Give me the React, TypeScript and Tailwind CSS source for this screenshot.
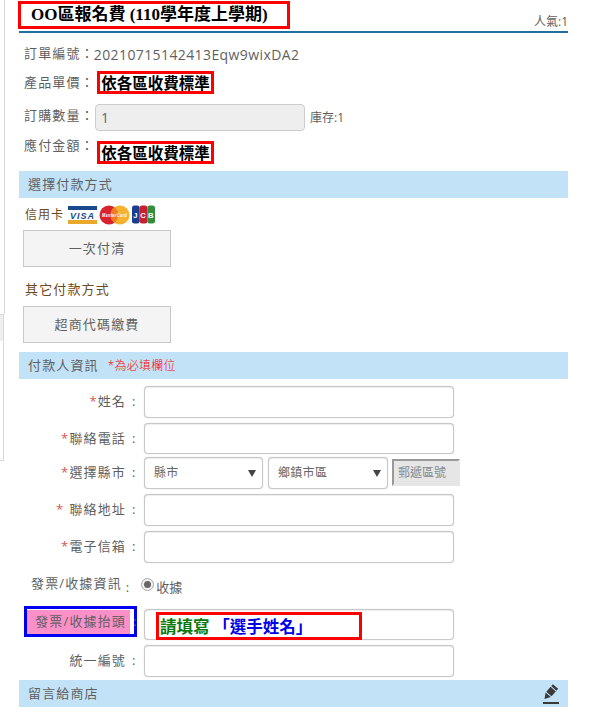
import React from 'react';

const cjk = '"Open Sans", "Noto Sans CJK TC", sans-serif';

const SectionBar = ({ children, className = '' }: { children: React.ReactNode; className?: string }) => (
  <div className={`flex h-[27px] items-center justify-between bg-[#c2e3f7] pl-[9px] pr-[9px] text-[13px] tracking-[1.15px] text-[#5f5f5f] ${className}`}>
    {children}
  </div>
);

const PriceTag = ({ className = '' }: { className?: string }) => (
  <span
    className={`inline-flex h-[23px] w-[117px] shrink-0 items-center justify-center whitespace-nowrap border-[3px] border-[#f00] bg-white text-[15.5px] font-bold tracking-normal text-black ${className}`}
    style={{ fontFamily: '"Noto Sans CJK TC", sans-serif' }}
  >
    依各區收費標準
  </span>
);

const PayButton = ({ label, className = '' }: { label: string; className?: string }) => (
  <button className={`ml-[4px] block h-[37px] w-[148px] border border-[#c8c8c8] bg-[#f4f4f4] text-[13px] tracking-[1.15px] text-[#5f5f5f] ${className}`}>
    {label}
  </button>
);

const FieldLabel = ({ star, text, gap }: { star?: boolean; text: string; gap?: boolean }) => (
  <label className="flex w-[125px] shrink-0 items-center justify-end pr-[4px] text-[13px] tracking-[1.15px] text-[#5f5f5f]">
    {star && <span className={`text-[#d9534f] ${gap ? 'mr-[5px]' : ''}`}>*</span>}
    {text}
    <span className="ml-[6px] w-[8px]">:</span>
  </label>
);

const TextInput = () => (
  <div className="h-full w-[310px] rounded-[4px] border border-[#c8c8c8] bg-white shadow-[inset_0_1px_1px_rgba(0,0,0,0.075),0_0_1px_rgba(0,0,0,0.25)]" />
);

const Field = ({ star, text, gap, className = '' }: { star?: boolean; text: string; gap?: boolean; className?: string }) => (
  <div className={`flex ${className}`}>
    <FieldLabel star={star} text={text} gap={gap} />
    <TextInput />
  </div>
);

const SelectBox = ({ label, width }: { label: string; width: string }) => (
  <div className={`flex h-full items-center justify-between rounded-[4px] border border-[#c8c8c8] bg-white pl-[9px] pr-[6px] text-[12px] tracking-[0.3px] text-[#666] shadow-[inset_0_1px_1px_rgba(0,0,0,0.075),0_0_1px_rgba(0,0,0,0.25)] ${width}`}>
    {label}
    <svg width="8" height="7" viewBox="0 0 8 7"><path d="M0 0h8L4 7z" fill="#444" /></svg>
  </div>
);

const CardIcons = () => (
  <span className="ml-[4px] inline-flex items-center gap-[2px]">
    <svg width="29" height="18" viewBox="0 0 29 18">
      <rect width="29" height="18" fill="#fff" />
      <rect width="29" height="4" fill="#1a4a8e" />
      <rect y="14" width="29" height="4" fill="#e9a92c" />
      <text x="14.5" y="12.5" textAnchor="middle" fontSize="9" fontStyle="italic" fontWeight="700" fontFamily='"Liberation Sans", sans-serif' fill="#1a4a8e">VISA</text>
    </svg>
    <svg width="31" height="20" viewBox="0 0 62 40">
      <circle cx="20" cy="20" r="19" fill="#d8232f" />
      <circle cx="42" cy="20" r="19" fill="#f4b22f" />
      <path d="M31 4.6a19 19 0 0 1 0 30.8a19 19 0 0 1 0-30.8z" fill="#ee7b26" />
      <text x="6" y="24" textLength="50" lengthAdjust="spacingAndGlyphs" fontSize="10" fontWeight="700" fontStyle="italic" fontFamily='"Liberation Sans", sans-serif' fill="#fff">MasterCard</text>
    </svg>
    <svg width="23" height="19" viewBox="0 0 24 19">
      <rect x="0" width="8" height="19" rx="2.5" fill="#1a3d8f" />
      <rect x="8" width="8" height="19" rx="2.5" fill="#c8202f" />
      <rect x="16" width="8" height="19" rx="2.5" fill="#2f8f3c" />
      <text x="4" y="13" textAnchor="middle" fontSize="8" fontWeight="700" fontFamily='"Liberation Sans", sans-serif' fill="#fff">J</text>
      <text x="12" y="13" textAnchor="middle" fontSize="8" fontWeight="700" fontFamily='"Liberation Sans", sans-serif' fill="#fff">C</text>
      <text x="20" y="13" textAnchor="middle" fontSize="8" fontWeight="700" fontFamily='"Liberation Sans", sans-serif' fill="#fff">B</text>
    </svg>
  </span>
);

export default function App() {
  return (
    <div className="relative h-[723px] w-[593px] overflow-hidden bg-white" style={{ fontFamily: cjk }}>
      {/* page behind the form, peeking out on the left */}
      <div className="absolute left-0 top-0 h-[314px] w-[5px] border-r border-[#d8d8d8]" />
      <div className="absolute left-0 top-[314px] h-[147px] w-[4px] border-r border-b border-t border-[#d8d8d8]">
        <div className="h-[26px] bg-[#eeeeee]" />
      </div>

      <div className="ml-[19px] w-[549px]">
        {/* title */}
        <div className="relative flex h-[33px] items-start justify-between border-b-2 border-[#1f6f9f]">
          <h1
            className="absolute left-[-1px] top-[1px] flex h-[28px] w-[272px] items-center whitespace-nowrap border-[3px] border-[#f00] pl-[10px] text-[17px] font-bold text-black"
            style={{ fontFamily: '"Liberation Serif", "Noto Sans CJK TC", serif' }}
          >
            OO區報名費 (110學年度上學期)
          </h1>
          <span className="ml-auto mt-[14px] text-[12px] leading-[16px] text-[#5f5f5f]">人氣:1</span>
        </div>

        {/* order summary */}
        <div className="flex h-[37px] items-center pl-[5px] pt-[5px] text-[13px] tracking-[1.15px] text-[#5f5f5f]">
          訂單編號：<span className="ml-[-1px] text-[14px] tracking-[0.4px]">20210715142413Eqw9wixDA2</span>
        </div>
        <div className="mt-[1px] flex h-[23px] items-center pl-[5px] text-[13px] tracking-[1.15px] text-[#5f5f5f]">
          <span className="w-[74px] shrink-0 pt-[1px]">產品單價：</span>
          <PriceTag className="ml-[-1px]" />
        </div>
        <div className="mt-[10px] flex h-[27px] items-center pl-[5px] text-[13px] tracking-[1.15px] text-[#5f5f5f]">
          <span className="mb-[3px] w-[71px] shrink-0">訂購數量：</span>
          <div className="flex h-full w-[210px] items-center rounded-[4px] border border-[#ccc] bg-[#eeeeee] pl-[5px] text-[14px] tracking-normal text-[#666]">1</div>
          <span className="ml-[5px] text-[12px] tracking-normal">庫存:1</span>
        </div>
        <div className="mt-[10px] flex h-[23px] items-start pl-[5px] text-[13px] tracking-[1.15px] text-[#5f5f5f]">
          <span className="mt-[-5px] w-[73px] shrink-0">應付金額：</span>
          <PriceTag />
        </div>

        {/* payment */}
        <SectionBar className="mt-[7px]">選擇付款方式</SectionBar>
        <div className="mt-[6px] flex h-[21px] items-center pl-[6px] text-[12px] tracking-[1px] text-[#6b4a1e]">
          信用卡
          <CardIcons />
        </div>
        <PayButton label="一次付清" className="mt-[5px]" />
        <div className="mt-[13px] pl-[6px] text-[13px] leading-[18px] tracking-[1.15px] text-[#6b4a1e]">其它付款方式</div>
        <PayButton label="超商代碼繳費" className="mt-[8px]" />

        {/* payer */}
        <SectionBar className="mt-[9px] justify-start">
          <span>付款人資訊</span>
          <span className="ml-[9px] text-[12px] font-light tracking-[0.2px] text-[#f00]">*為必填欄位</span>
        </SectionBar>
        <Field star text="姓名" className="mt-[7px] h-[32px]" />
        <Field star text="聯絡電話" className="mt-[5px] h-[31px]" />
        <div className="mt-[3px] flex h-[32px]">
          <FieldLabel star text="選擇縣市" />
          <SelectBox label="縣市" width="w-[119px]" />
          <div className="ml-[5px]">
            <SelectBox label="鄉鎮市區" width="w-[120px]" />
          </div>
          <div className="ml-[4px] mt-[2px] flex h-[27px] w-[68px] items-center border-2 border-[#999] border-b-[#e6e6e6] border-r-[#e6e6e6] bg-[#e6e6e6] pl-[4px] text-[12px] text-[#888]">郵遞區號</div>
        </div>
        <Field star gap text="聯絡地址" className="mt-[5px] h-[32px]" />
        <Field star text="電子信箱" className="mt-[5px] h-[32px]" />

        {/* invoice */}
        <div className="mt-[9px] flex h-[24px] items-center text-[13px] text-[#5f5f5f]">
          <span className="ml-[12px] tracking-[1.15px]">發票/收據資訊</span>
          <span className="ml-[4px] mt-[8px]">:</span>
          <span className="ml-[12px] flex h-[13px] w-[13px] items-center justify-center rounded-full border border-[#aaa] bg-[#f0f0f0]">
            <span className="h-[7px] w-[7px] rounded-full bg-[#666]" />
          </span>
          <span className="ml-[2px] mt-[8px]">收據</span>
        </div>
        <div className="mt-[10px] flex h-[31px]">
          <label className="ml-[5px] flex h-[31px] w-[113px] shrink-0 items-center border-[3px] border-[#0000f0] bg-white text-[13px] tracking-[1.15px] text-[#5f5f5f]">
            <span className="flex h-[24px] w-[103px] shrink-0 items-center justify-end whitespace-nowrap bg-[#fb8fc8] pr-[4px]">發票/收據抬頭</span>
            <span className="ml-[3px]">:</span>
          </label>
          <div className="relative ml-[7px] mt-[3px] h-[31px]">
            <TextInput />
            <div className="absolute left-[12px] top-[3px] flex h-[28px] w-[206px] items-center whitespace-pre border-[3px] border-[#f00] pl-[1px] text-[16.5px] font-bold" style={{ fontFamily: '"Noto Sans CJK TC", sans-serif' }}>
              <span className="text-[#0a7a0a]">請填寫 </span>
              <span className="text-[#0000e6]">「選手姓名」</span>
            </div>
          </div>
        </div>
        <Field text="統一編號" className="mt-[8px] h-[32px]" />

        {/* message */}
        <SectionBar className="mt-[3px]">
          <span>留言給商店</span>
          <svg width="16" height="20" viewBox="0 0 16 20">
            <path d="M9.9 0.2L15.1 4.8 13.45 6.7 8.25 2.1zM7.6 2.8L12.8 7.4 8.5 12.3 3.3 7.7zM2.6 8.45L7.8 13.05 1.5 15z" fill="#3a3a3a" />
            <rect y="18" width="16" height="2" fill="#3a3a3a" />
          </svg>
        </SectionBar>
      </div>
    </div>
  );
}
